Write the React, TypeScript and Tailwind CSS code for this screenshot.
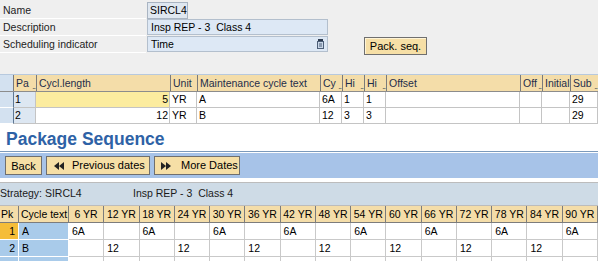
import React from "react";

const topCols =
  "grid grid-cols-[13px_23px_134px_27px_123px_22px_22px_22px_134px_22px_28px_28px]";

const topHeads: { label: string; more?: boolean }[] = [
  { label: "Pa", more: true },
  { label: "Cycl.length" },
  { label: "Unit" },
  { label: "Maintenance cycle text" },
  { label: "Cy", more: true },
  { label: "Hi", more: true },
  { label: "Hi", more: true },
  { label: "Offset" },
  { label: "Off", more: true },
  { label: "Initial" },
  { label: "Sub", more: true },
];

const topRows = [
  ["1", "5", "YR", "A", "6A", "1", "1", "", "", "", "29"],
  ["2", "12", "YR", "B", "12", "3", "3", "", "", "", "29"],
];

const years = [6, 12, 18, 24, 30, 36, 42, 48, 54, 60, 66, 72, 78, 84, 90];

function Dots() {
  return (
    <span className="absolute bottom-[1px] right-[1px] text-[7px] leading-none tracking-[-1px]">
      ...
    </span>
  );
}

function FormRow({ label, children }: { label: string; children: React.ReactNode }) {
  return (
    <div className="flex h-[17px] items-stretch">
      <div className="w-[146px] border-b border-white pl-[3px] leading-[16px] text-[#222]">
        {label}
      </div>
      {children}
    </div>
  );
}

export default function App() {
  return (
    <div
      className="relative h-[261px] w-[600px] overflow-hidden bg-white text-[10px] text-black"
      style={{ fontFamily: '"Liberation Sans", Arial, sans-serif' }}
    >
      {/* header fields */}
      <div className="w-[598px] bg-[#efefef] pb-[21px] pt-[2px] text-[10.5px]">
        <FormRow label="Name">
          <div className="ml-[1px] h-[17px] w-[41px] whitespace-nowrap border border-[#a9b4c2] bg-[#dfe7f0] pl-[2px] leading-[15px]">
            SIRCL4
          </div>
        </FormRow>
        <FormRow label="Description">
          <div className="ml-[1px] h-[16px] w-[181px] border border-[#b3bfcd] bg-[#dde8f5] pl-[3px] leading-[14px]">
            Insp REP - 3&nbsp;&nbsp;Class 4
          </div>
        </FormRow>
        <FormRow label="Scheduling indicator">
          <div className="relative ml-[1px] h-[16px] w-[181px] border border-[#b3bfcd] bg-[#dde8f5] pl-[3px] leading-[14px]">
            Time
            <svg className="absolute right-[3px] top-[2px]" width="7" height="10" viewBox="0 0 7 10">
              <rect x="0.5" y="2.5" width="6" height="7" fill="#c9d7e8" stroke="#4d5f78" />
              <rect x="1" y="0" width="5" height="2" fill="#2d3b50" />
              <line x1="2" y1="5" x2="5" y2="5" stroke="#4d5f78" />
              <line x1="2" y1="7" x2="5" y2="7" stroke="#4d5f78" />
            </svg>
          </div>
          <button className="ml-[36px] mt-[1px] h-[18px] w-[63px] whitespace-nowrap border border-[#6f6f6f] bg-[#f6dfa6] text-[11px] leading-[15px] text-black shadow-[inset_1px_1px_0_#fff4d6]">
            Pack. seq.
          </button>
        </FormRow>
      </div>

      {/* upper table */}
      <div className="w-[598px] border-t border-[#b7c9de]">
        <div className={`${topCols} h-[17px] border-b border-[#8c8c8c]`}>
          <div className="bg-[#d3e1f0]" />
          {topHeads.map((h, i) => (
            <div
              key={i}
              className="relative overflow-hidden whitespace-nowrap border-l border-[#7a7a7a] bg-[#f4dda9] pl-[2px] text-[10.5px] leading-[16px] text-[#1e2d4a]"
            >
              {h.label}
              {h.more && <Dots />}
            </div>
          ))}
        </div>
        {topRows.map((r, ri) => (
          <div key={ri} className={`${topCols} h-[16px]`}>
            <div className="border-b border-white bg-[#d3e1f0]" />
            {r.map((c, ci) => (
              <div
                key={ci}
                className={`overflow-hidden whitespace-nowrap border-b border-r border-[#c4c4c4] text-[10.5px] leading-[15px] ${
                  ci === 0
                    ? "border-l border-l-[#5f7894] bg-[#dde7f2] pl-[1px]"
                    : ci === 1
                      ? `pr-[1px] text-right ${ri === 0 ? "bg-[#fcec9f]" : "bg-white"}`
                      : "bg-white pl-[2px]"
                }`}
              >
                {c}
              </div>
            ))}
          </div>
        ))}
      </div>

      {/* title */}
      <div className="mt-[4px] pl-[6px] text-[17.5px] font-bold leading-[22px] text-[#2e62a6]">
        Package Sequence
      </div>

      {/* toolbar */}
      <div className="mt-[1px] w-[598px] border-t border-[#7c9abb]">
        <div className="flex h-[27px] items-center gap-[4px] border-y border-white bg-[#a7c3e8] pl-[5px] text-[11px]">
          <button className="h-[19px] w-[37px] whitespace-nowrap border border-[#6f6f6f] bg-[#f6dfa6] leading-[16px]">
            Back
          </button>
          <button className="flex h-[19px] w-[104px] items-center gap-[8px] whitespace-nowrap border border-[#6f6f6f] bg-[#f6dfa6] pl-[7px]">
            <svg width="10" height="8" viewBox="0 0 10 8">
              <path d="M5 0 L0 4 L5 8 Z M10 0 L5 4 L10 8 Z" fill="#222" />
            </svg>
            Previous dates
          </button>
          <button className="flex h-[19px] w-[86px] items-center gap-[10px] whitespace-nowrap border border-[#6f6f6f] bg-[#f6dfa6] pl-[6px]">
            <svg width="10" height="8" viewBox="0 0 10 8">
              <path d="M0 0 L5 4 L0 8 Z M5 0 L10 4 L5 8 Z" fill="#222" />
            </svg>
            More Dates
          </button>
        </div>
      </div>

      {/* strategy line */}
      <div className="mt-[3px] flex h-[24px] w-[598px] items-center border-y border-[#bcbcbc] bg-[#cedbe6] text-[10.5px] text-[#1a1a1a]">
        <span className="w-[133px] whitespace-nowrap">Strategy: SIRCL4</span>
        <span className="whitespace-nowrap">Insp REP - 3&nbsp;&nbsp;Class 4</span>
      </div>

      {/* package table */}
      <div className="grid w-[598px] grid-cols-[19px_50px_repeat(15,minmax(0,1fr))] text-[10.5px]">
        <div className="h-[17px] border-b border-r border-[#7c7c7c] bg-[#f4dda9] pl-[1px] leading-[16px]">Pk</div>
        <div className="h-[17px] overflow-hidden whitespace-nowrap border-b border-r border-[#7c7c7c] bg-[#f4dda9] pl-[2px] leading-[16px]">
          Cycle text
        </div>
        {years.map((y) => (
          <div
            key={y}
            className="h-[17px] whitespace-nowrap border-b border-r border-[#7c7c7c] bg-[#f4dda9] text-center leading-[16px]"
          >
            {y} YR
          </div>
        ))}

        {[
          { n: "1", t: "A", v: "6A", odd: 0, pk: "bg-[#f5bd38]" },
          { n: "2", t: "B", v: "12", odd: 1, pk: "bg-[#a9cbea]" },
        ].map((row) => (
          <React.Fragment key={row.n}>
            <div className={`h-[17px] border-b border-r border-white pr-[3px] text-right leading-[16px] ${row.pk}`}>
              {row.n}
            </div>
            <div className="h-[17px] border-b border-r border-white bg-[#a9cbea] pl-[3px] leading-[16px]">
              {row.t}
            </div>
            {years.map((y, i) => (
              <div
                key={y}
                className="h-[17px] border-b border-r border-[#c9c9c9] bg-white pl-[3px] leading-[16px]"
              >
                {i % 2 === row.odd ? row.v : ""}
              </div>
            ))}
          </React.Fragment>
        ))}
        <div className="h-[6px] border-r border-white bg-[#a9cbea]" />
        <div className="h-[6px] border-r border-white bg-[#a9cbea]" />
        {years.map((y) => (
          <div key={y} className="h-[6px] border-r border-[#c9c9c9] bg-white" />
        ))}
      </div>
    </div>
  );
}
